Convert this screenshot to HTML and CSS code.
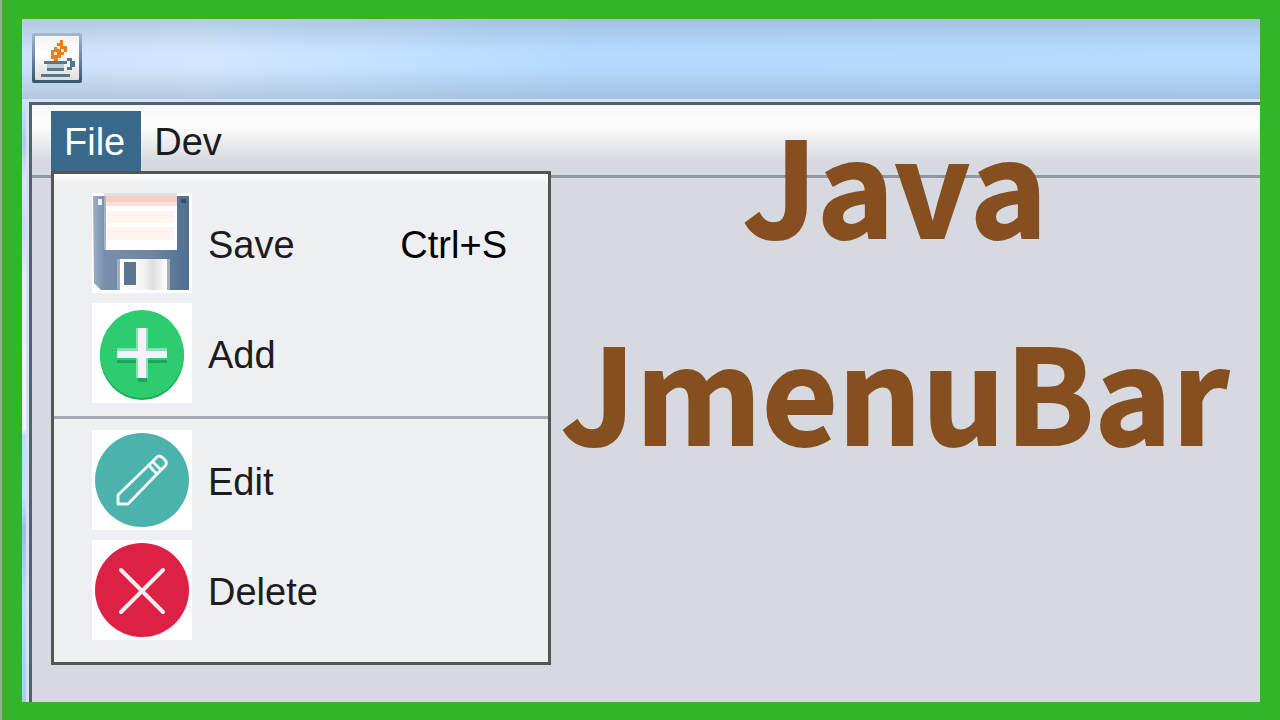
FILE: index.html
```html
<!DOCTYPE html>
<html lang="en">
<head>
    <meta charset="UTF-8">
    <meta name="viewport" content="width=device-width, initial-scale=1.0">
    <title>Java JmenuBar</title>
    <link rel="stylesheet" href="styles.css">
</head>
<body>
    <main class="window">
        <header class="titlebar">
            <svg class="java-icon" viewBox="0 0 50 50" aria-hidden="true">
                <defs>
                    <linearGradient id="frame" x1="0" y1="0" x2="0" y2="1">
                        <stop offset="0" stop-color="#a3b9cc"/>
                        <stop offset="1" stop-color="#365773"/>
                    </linearGradient>
                    <linearGradient id="face" x1="0" y1="0" x2="0" y2="1">
                        <stop offset="0" stop-color="#f2f2f2"/>
                        <stop offset="0.4" stop-color="#ffffff"/>
                        <stop offset="1" stop-color="#dedede"/>
                    </linearGradient>
                </defs>
                <rect width="50" height="50" rx="2" fill="url(#frame)"/>
                <rect x="3" y="3" width="44" height="44" rx="1" fill="url(#face)"/>
                <path d="M28 7h3v6h4v6h-3v3h-3v3h-3v4h-4v-3h-3v-9h3v-3h3v-4h3z" fill="#ed7d14"/>
                <path d="M25 13h3v3h-3zM22 19h3v3h-3zM29 16h3v3h-3z" fill="#fbe4cd"/>
                <path d="M12 28h23v3H12zM15 35h17v3H15zM9 41h29v3H9zM35 25h5v3h-5zM38 28h5v6h-5zM35 34h5v3h-5z" fill="#53798f"/>
                <path d="M15 31h17v4H15z" fill="#bccbd6"/>
            </svg>
        </header>
        <div class="content">
            <nav class="menubar">
                <button class="menu active" type="button">File</button>
                <button class="menu" type="button">Dev</button>
            </nav>

            <div class="popup">
                <button class="item" type="button">
                    <svg class="icon" viewBox="0 0 100 100" aria-hidden="true">
                        <defs>
                            <linearGradient id="disk" x1="0" y1="0" x2="1" y2="0">
                                <stop offset="0" stop-color="#9bb0c6"/>
                                <stop offset="0.12" stop-color="#788fab"/>
                                <stop offset="0.6" stop-color="#6e86a3"/>
                                <stop offset="1" stop-color="#526f91"/>
                            </linearGradient>
                            <linearGradient id="shutter" x1="0" y1="0" x2="1" y2="0">
                                <stop offset="0" stop-color="#ffffff"/>
                                <stop offset="0.5" stop-color="#f3f3f3"/>
                                <stop offset="0.7" stop-color="#dedede"/>
                                <stop offset="1" stop-color="#ffffff"/>
                            </linearGradient>
                        </defs>
                        <rect width="100" height="100" fill="#fff"/>
                        <path d="M1 3h96v94H9l-7-7z" fill="url(#disk)"/>
                        <path d="M12 0h73v4H12z" fill="#dcdfe3"/>
                        <path d="M12 3h2v54h-2z" fill="#a7b4c4"/>
                        <path d="M14 3h71v54H14z" fill="#fff"/>
                        <path d="M14 3h71v6H14z" fill="#f9cdbf"/>
                        <path d="M14 9h71v4H14z" fill="#fce0d7"/>
                        <path d="M15 18h67v12H15zM15 34h67v13H15z" fill="#fdf3ef"/>
                        <path d="M6 6h4v6H6z" fill="#f3f3f3"/>
                        <path d="M89 6h5v4h-5z" fill="#304e70"/>
                        <path d="M25 66h3v31h-3zM75 66h3v31h-3z" fill="#a3afbd"/>
                        <path d="M28 66h47v31H28z" fill="url(#shutter)"/>
                        <path d="M32 69h12v23H32z" fill="#5b7492"/>
                    </svg>
                    <span class="label">Save</span>
                    <span class="shortcut">Ctrl+S</span>
                </button>
                <button class="item" type="button">
                    <svg class="icon" viewBox="0 0 100 100" aria-hidden="true">
                        <rect width="100" height="100" fill="#fff"/>
                        <ellipse cx="50" cy="53" rx="42" ry="44" fill="#18ad54"/>
                        <ellipse cx="50" cy="51" rx="42" ry="44" fill="#2ecc71"/>
                        <path d="M25 57h50v3H25zM46 75h9v4h-9z" fill="#1fa557"/>
                        <path d="M44 25h12v50H44zM25 45h50v10H25z" fill="#8be0af"/>
                        <path d="M25 48h50v7H25zM46 25h8v50h-8z" fill="#f7f2f9"/>
                    </svg>
                    <span class="label">Add</span>
                </button>
                <hr class="separator">
                <button class="item" type="button">
                    <svg class="icon" viewBox="0 0 100 100" aria-hidden="true">
                        <rect width="100" height="100" fill="#fff"/>
                        <circle cx="50" cy="50" r="47" fill="#4bb3ab"/>
                        <g fill="none" stroke="#edf8f6" stroke-width="3" stroke-linejoin="round">
                            <path d="M26 74V65L57 35L61 40L65 44L36 74z"/>
                            <path d="M57 35L64 28Q67 24 71 28L73 30Q76 34 72 37L65 44"/>
                            <path d="M61 32L69 40"/>
                        </g>
                    </svg>
                    <span class="label">Edit</span>
                </button>
                <button class="item" type="button">
                    <svg class="icon" viewBox="0 0 100 100" aria-hidden="true">
                        <rect width="100" height="100" fill="#fff"/>
                        <circle cx="50" cy="50" r="47" fill="#dc2145"/>
                        <path d="M29 30L71 72M71 30L29 72" stroke="#fdecef" stroke-width="4" stroke-linecap="round"/>
                    </svg>
                    <span class="label">Delete</span>
                </button>
            </div>
        </div>

        <h1 class="caption">Java<br>JmenuBar</h1>
    </main>
</body>
</html>
```

FILE: styles.css
```css
* {
    box-sizing: border-box;
}
body {
    margin: 0;
    min-height: 100vh;
    display: flex;
    padding: 19px 20px 18px;
    border-left: 2px solid #a0a5a0;
    background-color: #33b529;
    font-family: "Liberation Sans", Arial, sans-serif;
}
.window {
    flex: 1;
    position: relative;
    display: flex;
    flex-direction: column;
    padding-left: 7px;
    background: linear-gradient(#cfe4fb 12%, #b4c8e2 18%, #dbe9fb 24%, #c9dbee 31%, #e4f0fd 38%, #f0f7ff 60%, #bfdcff 61%, #c8e2ff 70%, #9fbcd8 75%, #c3dcf6 85%, #a9cbed);
}
.titlebar {
    display: flex;
    height: 80px;
    margin-left: -7px;
    padding: 14px 10px;
    background:
        linear-gradient(rgba(125, 150, 170, 0.35), rgba(125, 150, 170, 0) 40%, rgba(125, 150, 170, 0) 60%, rgba(125, 150, 170, 0.35)),
        linear-gradient(to right, #cde2fa, #d1e7ff 15%, #b5d9ff 45%, #b7daff);
}
.java-icon {
    width: 50px;
    height: 50px;
}
.content {
    flex: 1;
    position: relative;
    border-top: 3px solid #53616f;
    border-left: 3px solid #53616f;
    box-shadow: 0 0 0 3px #d3e3f4;
    clip-path: inset(-3px 0 0 -3px);
    margin-top: 3px;
    background-color: #d6d9e0;
}
.menubar {
    display: flex;
    height: 73px;
    padding: 6px 19px 0;
    border-bottom: 3px solid #9297a3;
    background: linear-gradient(#f6f6f6, #fdfdfd 28%, #d6d9df 82%, #d6d9e0);
}
.menu {
    height: 61px;
    padding: 2px 16px 0 13px;
    border: none;
    background: none;
    color: #1c1c20;
    font-family: inherit;
    font-size: 38px;
}
.menu.active {
    background-color: #39698a;
    color: #ffffff;
}
.popup {
    position: absolute;
    top: 66px;
    left: 19px;
    width: 500px;
    padding: 14px 0 17px;
    border: 3px solid #555555;
    background: linear-gradient(#ffffff, #edeff2 10px);
}
.item {
    display: flex;
    align-items: center;
    gap: 16px;
    width: 100%;
    height: 110px;
    padding: 0 41px 0 38px;
    border: none;
    background: none;
    color: #1c1c20;
    font-family: inherit;
    font-size: 38px;
    text-align: left;
}
.icon {
    width: 100px;
    height: 100px;
}
.label,
.shortcut {
    padding-top: 4px;
}
.shortcut {
    margin-left: auto;
    color: #000000;
}
.separator {
    height: 3px;
    margin: 8px 0 6px;
    border: none;
    background-color: #a4a9b2;
}
.caption {
    position: absolute;
    top: 59px;
    left: 530px;
    right: 22px;
    margin: 0;
    color: #854f20;
    font-family: "Noto Sans CJK SC", sans-serif;
    font-size: 131px;
    font-weight: bold;
    font-kerning: none;
    line-height: 207px;
    text-align: center;
    -webkit-text-stroke: 2px #854f20;
}
```
